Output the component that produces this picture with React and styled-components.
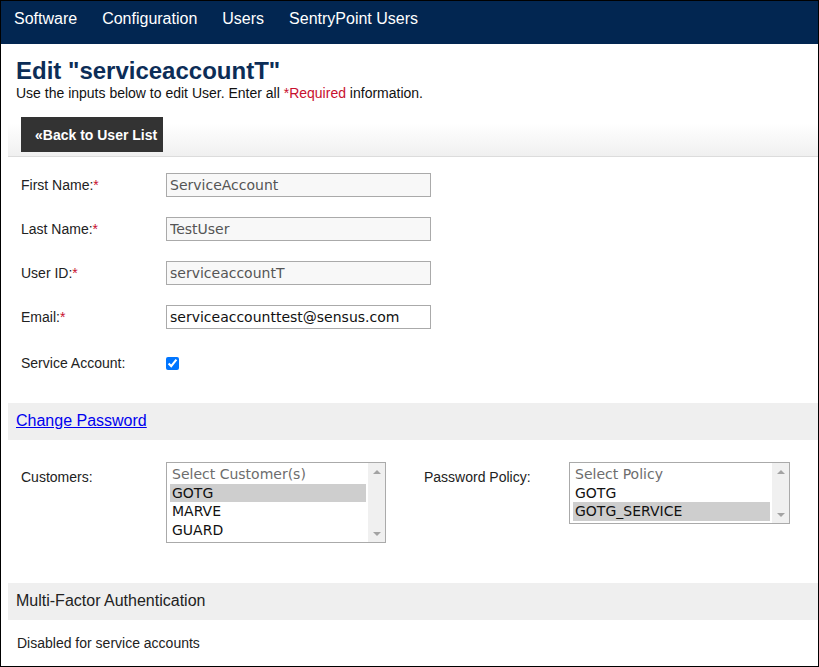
import React from 'react';
import styled, { createGlobalStyle } from 'styled-components';

const customers = ['GOTG', 'MARVE', 'GUARD'];
const policies = ['GOTG', 'GOTG_SERVICE'];

export default function App() {
  return (
    <>
      <GlobalStyle />
      <Frame>
        <Nav>
          <NavLink>Software</NavLink>
          <NavLink>Configuration</NavLink>
          <NavLink>Users</NavLink>
          <NavLink>SentryPoint Users</NavLink>
        </Nav>
        <Content>
          <Title>Edit "serviceaccountT"</Title>
          <Subtitle>
            Use the inputs below to edit User. Enter all <Req>*Required</Req> information.
          </Subtitle>
          <Toolbar>
            <BackButton>«Back to User List</BackButton>
          </Toolbar>

          <Form>
            <Row>
              <Label>First Name:<Req>*</Req></Label>
              <TextInput value="ServiceAccount" readOnly disabledLook />
            </Row>
            <Row>
              <Label>Last Name:<Req>*</Req></Label>
              <TextInput value="TestUser" readOnly disabledLook />
            </Row>
            <Row>
              <Label>User ID:<Req>*</Req></Label>
              <TextInput value="serviceaccountT" readOnly disabledLook />
            </Row>
            <Row>
              <Label>Email:<Req>*</Req></Label>
              <TextInput value="serviceaccounttest@sensus.com" readOnly />
            </Row>
            <CheckRow>
              <Label>Service Account:</Label>
              <Check type="checkbox" checked readOnly />
            </CheckRow>
          </Form>

          <SectionBar>
            <BarLink href="#">Change Password</BarLink>
          </SectionBar>

          <SelectRow>
            <SelectGroup>
              <SelectLabel>Customers:</SelectLabel>
              <ListBox
                width={220}
                height={81}
                placeholder="Select Customer(s)"
                options={customers}
                selected="GOTG"
              />
            </SelectGroup>
            <SelectGroup>
              <SelectLabel>Password Policy:</SelectLabel>
              <ListBox
                width={221}
                height={62}
                placeholder="Select Policy"
                options={policies}
                selected="GOTG_SERVICE"
              />
            </SelectGroup>
          </SelectRow>

          <SectionBar>
            <BarTitle>Multi-Factor Authentication</BarTitle>
          </SectionBar>
          <Note>Disabled for service accounts</Note>
        </Content>
      </Frame>
    </>
  );
}

function ListBox({ width, height, placeholder, options, selected }) {
  return (
    <Box style={{ width, height }}>
      <Options>
        <Option placeholder>{placeholder}</Option>
        {options.map((o) => (
          <Option key={o} selected={o === selected}>{o}</Option>
        ))}
      </Options>
      <Scrollbar>
        <Arrow up />
        <Arrow />
      </Scrollbar>
    </Box>
  );
}

const GlobalStyle = createGlobalStyle`
  html, body {
    margin: 0;
    padding: 0;
    background: #fff;
  }
  * {
    box-sizing: border-box;
  }
`;

const Frame = styled.div`
  width: 819px;
  height: 667px;
  border: 1px solid #000;
  overflow: hidden;
  background: #fff;
  font-family: "Liberation Sans", Arial, sans-serif;
  color: #222;
`;

const Nav = styled.nav`
  height: 43px;
  background: #022651;
  display: flex;
  align-items: flex-start;
  gap: 25px;
  padding: 9px 0 0 13px;
`;

const NavLink = styled.span`
  color: #fff;
  font-size: 16px;
  line-height: 18px;
`;

const Content = styled.div`
  padding-left: 7px;
`;

const Title = styled.h1`
  margin: 13px 0 0 8px;
  font-size: 24px;
  font-weight: bold;
  color: #0c2d57;
  line-height: normal;
`;

const Subtitle = styled.p`
  margin: 0 0 14px 8px;
  font-size: 14px;
  line-height: 16px;
  color: #111;
`;

const Req = styled.span`
  color: #c8102e;
`;

const Toolbar = styled.div`
  height: 42px;
  padding: 2px 0 0 13px;
  background: linear-gradient(#fff 0%, #fff 20%, #f0f0f0 100%);
  border-bottom: 1px solid #dcdcdc;
`;

const BackButton = styled.button`
  width: 142px;
  height: 35px;
  padding: 0 0 0 14px;
  text-align: left;
  border: none;
  background: #333;
  color: #fff;
  font-family: "Liberation Sans", Arial, sans-serif;
  font-weight: bold;
  font-size: 14px;
  white-space: nowrap;
`;

const Form = styled.div`
  padding: 16px 0 0 13px;
`;

const Row = styled.div`
  display: flex;
  align-items: center;
  height: 24px;
  margin-bottom: 20px;
`;

const CheckRow = styled(Row)`
  margin-top: 22px;
  margin-bottom: 28px;
`;

const Label = styled.label`
  width: 145px;
  font-size: 14px;
  color: #222;
`;

const TextInput = styled.input`
  width: 265px;
  height: 24px;
  border: 1px solid #aaa;
  padding: 0 3px;
  font-family: "DejaVu Sans", Verdana, sans-serif;
  font-size: 14px;
  background: ${(p) => (p.disabledLook ? '#f8f8f8' : '#fff')};
  color: ${(p) => (p.disabledLook ? '#555' : '#111')};
  outline: none;
`;

const Check = styled.input`
  width: 13px;
  height: 13px;
  margin: 0;
  accent-color: #0075ff;
`;

const SectionBar = styled.div`
  height: 37px;
  background: #efefef;
  display: flex;
  align-items: center;
  padding-left: 8px;
`;

const BarLink = styled.a`
  font-size: 16px;
  color: #0000ee;
  text-decoration: underline;
  margin-top: -2px;
`;

const BarTitle = styled.span`
  font-size: 16px;
  color: #222;
  margin-top: -2px;
`;

const SelectRow = styled.div`
  display: flex;
  gap: 38px;
  padding: 22px 0 0 13px;
  height: 143px;
`;

const SelectGroup = styled.div`
  display: flex;
  align-items: flex-start;
`;

const SelectLabel = styled(Label)`
  padding-top: 7px;
`;

const Box = styled.div`
  display: flex;
  border: 1px solid #aaa;
  background: #fff;
`;

const Options = styled.div`
  flex: 1;
  padding: 2px 2px 0 3px;
`;

const Option = styled.div`
  height: 18.67px;
  line-height: 18.67px;
  padding-left: 2px;
  font-family: "DejaVu Sans", Verdana, sans-serif;
  font-size: 14px;
  white-space: nowrap;
  color: ${(p) => (p.placeholder ? '#6d6d6d' : '#111')};
  background: ${(p) => (p.selected ? '#cecece' : 'transparent')};
`;

const Scrollbar = styled.div`
  width: 17px;
  background: #f0f0f0;
  display: flex;
  flex-direction: column;
  justify-content: space-between;
  align-items: center;
  padding: 7px 0 6px;
`;

const Arrow = styled.div`
  width: 0;
  height: 0;
  border-left: 4px solid transparent;
  border-right: 4px solid transparent;
  ${(p) => (p.up ? 'border-bottom: 4px solid #a3a3a3;' : 'border-top: 4px solid #a3a3a3;')}
`;

const Note = styled.div`
  font-size: 14px;
  color: #222;
  padding: 15px 0 0 9px;
`;
